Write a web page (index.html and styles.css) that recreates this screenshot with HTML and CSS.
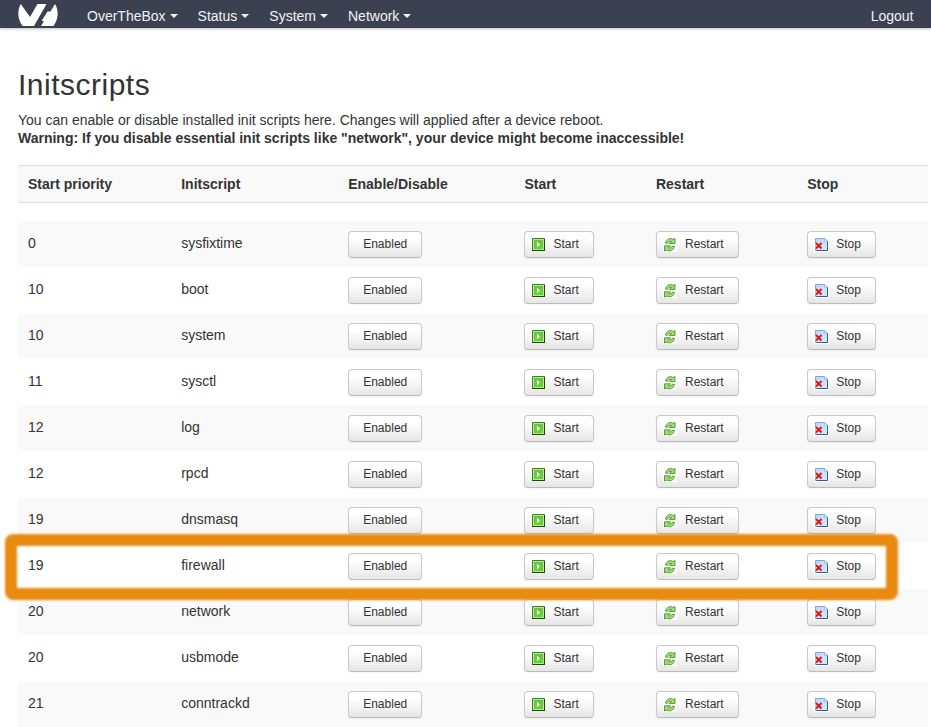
FILE: index.html
```html
<!DOCTYPE html>
<html lang="en">
<head>
<meta charset="utf-8">
<title>OverTheBox - Initscripts</title>
<link rel="stylesheet" href="styles.css">
</head>
<body>
<svg class="defs" aria-hidden="true">
  <defs>
    <linearGradient id="green" x1="0" y1="0" x2="0" y2="1"><stop offset="0" stop-color="#6cbf4a"/><stop offset="1" stop-color="#66d52c"/></linearGradient>
    <linearGradient id="blue" x1="0" y1="0" x2="1" y2="1"><stop offset="0" stop-color="#b4d8f8"/><stop offset="1" stop-color="#d5eaff"/></linearGradient>
  </defs>
  <symbol id="start" viewBox="0 0 16 16">
    <rect x="1" y="1" width="13" height="13" rx="1" fill="#2f8a17"/>
    <path d="M1 13V14H14V2H13V13z" fill="#174d08"/>
    <rect x="2" y="2" width="11" height="11" fill="#b5e69a"/>
    <rect x="3" y="3" width="9" height="9" fill="url(#green)"/>
    <path d="M6 5h1v1h1v1h1v1h-1v1h-1v1h-1z" fill="#fff"/>
  </symbol>
  <symbol id="restart" viewBox="0 0 16 16">
    <path d="M0 1h14v14H0z" fill="#fff" opacity=".8"/>
    <path d="M2.500 6C3.500 2 7 .5 10 2.500L12 1.500V6.500H6.500L8.500 4.500C6.500 4 5 5 4.500 6.500z" fill="#a3dc74" stroke="#4a9630" stroke-width=".9"/>
    <path d="M11.500 9.500C10.500 13.500 7 15 4 13L1.500 14V8.800H7.500L5.500 11C7.500 11.500 9 10.500 9.500 9z" fill="#a3dc74" stroke="#4a9630" stroke-width=".9"/>
  </symbol>
  <symbol id="stop" viewBox="0 0 16 16">
    <path d="M0 0h12l3 3v12H0z" fill="#fff"/>
    <path d="M1.500 1.500h9l3 2.500v9.500h-12z" fill="url(#blue)" stroke="#83a7d2"/>
    <path d="M13.500 4v9.500h-11" fill="none" stroke="#385b8c"/>
    <path d="M10.500 1.500v3h3z" fill="#f4faff" stroke="#83a7d2" stroke-width=".6"/>
    <path d="M2 6l5 5.500M7 6L2 11.500" stroke="#fff" stroke-width="4" opacity=".6"/>
    <path d="M2 6l5.500 5.500M7.500 6L2 11.500" stroke="#d9191c" stroke-width="2.200"/>
  </symbol>
</svg>
<header class="topbar">
  <a class="brand"><svg width="40" height="23" viewBox="0 0 40 23"><path d="M2.800 0L12 13L19.500 0H28.500L16 22H4.500C-.5 15-1 7 2.800 0zM37 0C41 7 40.500 15 35.500 22H23L26 17H23.500L29.500 7.500H32.500z" fill="#fff"/></svg></a>
  <nav class="menu">
    <a>OverTheBox<i class="caret"></i></a>
    <a>Status<i class="caret"></i></a>
    <a>System<i class="caret"></i></a>
    <a>Network<i class="caret"></i></a>
  </nav>
  <a class="logout">Logout</a>
</header>
<main>
  <h1>Initscripts</h1>
  <p>You can enable or disable installed init scripts here. Changes will applied after a device reboot.<br><strong>Warning: If you disable essential init scripts like "network", your device might become inaccessible!</strong></p>
  <div class="row head"><span>Start priority</span><span>Initscript</span><span>Enable/Disable</span><span>Start</span><span>Restart</span><span>Stop</span></div>
  <div class="rows">
    <div class="row"><span>0</span><span>sysfixtime</span><button>Enabled</button><button class="icon"><svg><use href="#start"/></svg>Start</button><button class="icon"><svg><use href="#restart"/></svg>Restart</button><button class="icon"><svg><use href="#stop"/></svg>Stop</button></div>
    <div class="row"><span>10</span><span>boot</span><button>Enabled</button><button class="icon"><svg><use href="#start"/></svg>Start</button><button class="icon"><svg><use href="#restart"/></svg>Restart</button><button class="icon"><svg><use href="#stop"/></svg>Stop</button></div>
    <div class="row"><span>10</span><span>system</span><button>Enabled</button><button class="icon"><svg><use href="#start"/></svg>Start</button><button class="icon"><svg><use href="#restart"/></svg>Restart</button><button class="icon"><svg><use href="#stop"/></svg>Stop</button></div>
    <div class="row"><span>11</span><span>sysctl</span><button>Enabled</button><button class="icon"><svg><use href="#start"/></svg>Start</button><button class="icon"><svg><use href="#restart"/></svg>Restart</button><button class="icon"><svg><use href="#stop"/></svg>Stop</button></div>
    <div class="row"><span>12</span><span>log</span><button>Enabled</button><button class="icon"><svg><use href="#start"/></svg>Start</button><button class="icon"><svg><use href="#restart"/></svg>Restart</button><button class="icon"><svg><use href="#stop"/></svg>Stop</button></div>
    <div class="row"><span>12</span><span>rpcd</span><button>Enabled</button><button class="icon"><svg><use href="#start"/></svg>Start</button><button class="icon"><svg><use href="#restart"/></svg>Restart</button><button class="icon"><svg><use href="#stop"/></svg>Stop</button></div>
    <div class="row"><span>19</span><span>dnsmasq</span><button>Enabled</button><button class="icon"><svg><use href="#start"/></svg>Start</button><button class="icon"><svg><use href="#restart"/></svg>Restart</button><button class="icon"><svg><use href="#stop"/></svg>Stop</button></div>
    <div class="row marked"><span>19</span><span>firewall</span><button>Enabled</button><button class="icon"><svg><use href="#start"/></svg>Start</button><button class="icon"><svg><use href="#restart"/></svg>Restart</button><button class="icon"><svg><use href="#stop"/></svg>Stop</button></div>
    <div class="row"><span>20</span><span>network</span><button>Enabled</button><button class="icon"><svg><use href="#start"/></svg>Start</button><button class="icon"><svg><use href="#restart"/></svg>Restart</button><button class="icon"><svg><use href="#stop"/></svg>Stop</button></div>
    <div class="row"><span>20</span><span>usbmode</span><button>Enabled</button><button class="icon"><svg><use href="#start"/></svg>Start</button><button class="icon"><svg><use href="#restart"/></svg>Restart</button><button class="icon"><svg><use href="#stop"/></svg>Stop</button></div>
    <div class="row"><span>21</span><span>conntrackd</span><button>Enabled</button><button class="icon"><svg><use href="#start"/></svg>Start</button><button class="icon"><svg><use href="#restart"/></svg>Restart</button><button class="icon"><svg><use href="#stop"/></svg>Stop</button></div>
  </div>
</main>
</body>
</html>
```
FILE: styles.css
```css
*, *::after { box-sizing: border-box; }
body {
  margin: 0;
  height: 727px;
  overflow: hidden;
  background: #fff;
  color: #333;
  font: 14px/18px "Liberation Sans", Arial, sans-serif;
}
.defs { position: absolute; width: 0; height: 0; }
.topbar {
  display: flex;
  height: 28px;
  padding: 0 17.5px 0 18px;
  background: #3c4152;
  border-bottom: 1px solid #3a3f4f;
  box-shadow: 0 1px 3px rgba(0, 0, 0, .25);
  color: #f2f2f4;
  line-height: 32px;
}
.brand { width: 69px; padding-top: 4px; }
.brand svg { display: block; }
.menu { display: flex; flex: 1; gap: 20px; }
.menu a { display: flex; align-items: flex-start; }
.caret {
  margin: 14px 0 0 4px;
  border: 4px solid transparent;
  border-top-color: #f2f2f4;
  border-bottom: 0;
}
main { padding: 38px 3px 0 18px; }
h1 {
  margin: 0 0 7px;
  font-size: 30px;
  font-weight: 400;
  line-height: 38px;
  letter-spacing: .5px;
}
p { margin: 0 0 18px; }
.row {
  display: grid;
  grid-template-columns: 153.2px 167px 176.2px 131.6px 151.2px 130.8px;
  height: 46px;
  padding-top: 10px;
  align-items: start;
  justify-items: start;
}
.row > * { margin-left: 10px; }
.row > span { line-height: 24px; }
.row:nth-child(odd) { background: #f9f9f9; }
.row.head {
  height: 38px;
  padding-top: 6px;
  margin-bottom: 18px;
  background: #f9f9f9;
  border: solid #ddd;
  border-width: 1px 0;
  font-weight: 700;
}
button {
  display: flex;
  align-items: center;
  height: 27px;
  padding: 0 14px 1px;
  border: 1px solid #c9c9c9;
  border-bottom-color: #bbb;
  border-radius: 4px;
  background: linear-gradient(#fff, #fff 25%, #e6e6e6);
  box-shadow: 0 1px 2px rgba(0, 0, 0, .05);
  color: #333;
  font: 12px/18px "Liberation Sans", Arial, sans-serif;
}
button.icon { padding-left: 6px; }
button svg { flex: none; width: 16px; height: 16px; margin: 2px 6px 0 0; }
.marked { position: relative; }
.row.marked::after {
  content: "";
  position: absolute;
  left: -13px;
  top: -9px;
  width: 893px;
  height: 66px;
  margin: 0;
  border: 12px solid #e88b10;
  border-radius: 8px;
  filter: blur(.8px);
  z-index: 1;
}
```
